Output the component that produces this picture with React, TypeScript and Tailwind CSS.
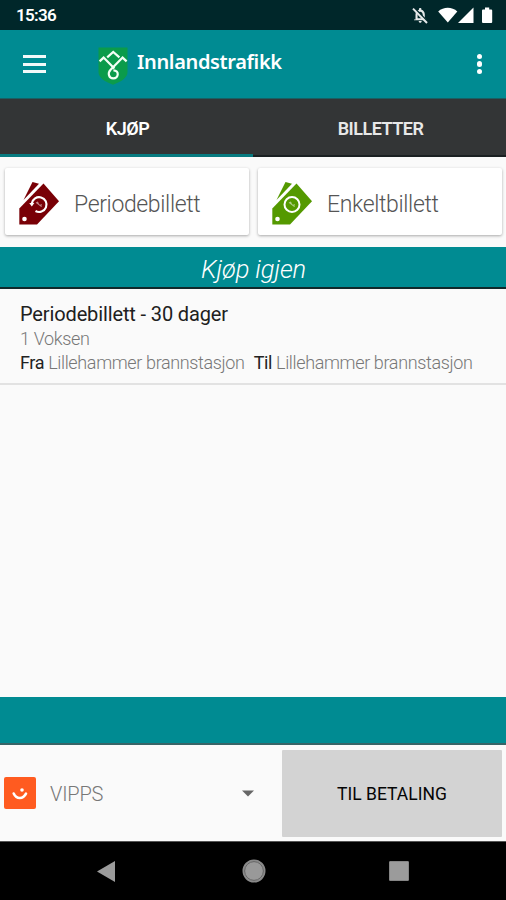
import React from 'react';

interface TicketIconProps {
  color: string;
  period?: boolean;
}

const TicketIcon: React.FC<TicketIconProps> = ({ color, period = false }) => (
  <svg width="40" height="43" viewBox="0 0 40 43" className="shrink-0">
    <path d="M13.5 0 L20 1.8 L4.5 18 Z" fill={color} />
    <path d="M24.5 1.4 L40 19.3 L18 42.5 H0.3 V26.5 Z" fill={color} />
    <circle cx="5.5" cy="37" r="2.3" fill="#fff" />
    {period ? (
      <>
        <path d="M12.8 21.5 A7.4 7.4 0 1 1 16.5 29" fill="none" stroke="#fff" strokeWidth="2.1" />
        <path d="M10.2 21 H15.4 L12.8 24.6 Z" fill="#fff" />
      </>
    ) : (
      <circle cx="20" cy="22.5" r="7.5" fill="none" stroke="#fff" strokeWidth="2" />
    )}
    <path d="M17 20.4 L22.6 24.6 M18.3 19.7 L19.5 21.7 M21 23.2 L23 22.8" stroke="#fff" strokeWidth="1.1" opacity="0.55" />
  </svg>
);

const StatusBar: React.FC = () => (
  <div className="flex h-[30px] shrink-0 items-center justify-between bg-[#00272a] pr-[11px] pl-4">
    <span className="pt-0.5 text-[17px] font-semibold tracking-[-0.7px] text-white">15:36</span>
    <svg width="84" height="20" viewBox="0 0 84 20" fill="#fff">
      <g opacity="0.9">
        <path d="M4.5 14.5 V9.5 C4.5 7 6 5.2 8 4.7 V4 C8 2.6 10.4 2.6 10.4 4 V4.7 C12.5 5.2 13.8 7 13.8 9.5 V13 L15.2 14.5 V15.3 H3 V14.5 Z M6.6 9.8 V13.2 H11.7 V9.8 C11.7 5.7 6.6 5.7 6.6 9.8 Z" fillRule="evenodd" />
        <path d="M7.7 16 H10.7 C10.7 18.4 7.7 18.4 7.7 16 Z" />
        <path d="M3.2 3 L17 17.2" stroke="#00272a" strokeWidth="1.8" />
        <path d="M2 3.6 L16 18" stroke="#fff" strokeWidth="2" />
      </g>
      <path d="M27.2 6.4 C32.5 1.4 41 1.4 46.3 6.4 L36.8 17.5 Z" />
      <path d="M47 18 L62.5 2.5 V18 Z" />
      <path d="M72 4.6 H74 V2.5 H78.2 V4.6 H80.2 Q81.2 4.6 81.2 5.6 V17 Q81.2 18 80.2 18 H72 Q71 18 71 17 V5.6 Q71 4.6 72 4.6 Z" />
    </svg>
  </div>
);

const AppBar: React.FC = () => (
  <header className="flex h-[68px] shrink-0 items-center bg-[#008b92] pr-6 pl-[23px] text-white">
    <div className="flex w-[23px] flex-col gap-[4.5px]">
      <span className="h-[3px] bg-white/95" />
      <span className="h-[3px] bg-white/95" />
      <span className="h-[3px] bg-white/95" />
    </div>
    <svg width="30" height="38" viewBox="0 0 30 38" className="mt-1 ml-[52px]">
      <path d="M0.5 0.5 H29.5 V25 C29.5 31 23 34.5 15 37.8 C7 34.5 0.5 31 0.5 25 Z" fill="#0b9b4b" />
      <g fill="none" stroke="#f3fff5" strokeWidth="2.2">
        <path d="M9.2 10.4 L15.2 5 L21.4 10.4" />
        <path d="M1.6 14.4 L5.6 10.6 L16.4 21.6" />
        <path d="M28.6 14.4 L24.6 10.6 L12.6 22.8 C9.2 26.4 11 31.4 15.2 31.4 C21 31.4 21.4 23.2 15.4 23.4" />
      </g>
    </svg>
    <h1 className="ml-[9px] pb-1 font-['Noto_Sans',sans-serif] text-[20px] font-semibold tracking-[-0.36px]">Innlandstrafikk</h1>
    <div className="ml-auto flex flex-col gap-[1.8px]">
      <span className="size-[5.5px] rounded-full bg-white" />
      <span className="size-[5.5px] rounded-full bg-white" />
      <span className="size-[5.5px] rounded-full bg-white" />
    </div>
  </header>
);

const Tabs: React.FC = () => (
  <nav className="grid h-[59px] shrink-0 grid-cols-2 border-t border-[#195f63] bg-[#333536] text-center text-[18px] font-semibold">
    <button className="border-b-3 border-[#087b80] pt-1 pl-0.5 tracking-[-0.5px] text-white">KJØP</button>
    <button className="border-b-2 border-[#1b2022] pt-[3px] pl-0.5 tracking-[-0.5px] text-[#e8e8e8]">BILLETTER</button>
  </nav>
);

interface TicketCardProps extends TicketIconProps {
  label: string;
}

const TicketCard: React.FC<TicketCardProps> = ({ label, ...icon }) => (
  <button className="flex h-[67px] items-center rounded-[2px] bg-white pt-1 pl-3.5 shadow-[0_1px_3px_rgba(0,0,0,0.33)]">
    <TicketIcon {...icon} />
    <span className="ml-[15px] pt-[3px] text-[23px] font-light tracking-[-0.36px] text-[#555]">{label}</span>
  </button>
);

const PreviousTicket: React.FC = () => (
  <article className="h-24 shrink-0 border-b-2 border-[#e2e2e2] pt-3 pl-5 font-light whitespace-nowrap text-[#777]">
    <h2 className="text-[20px] leading-[26px] font-normal tracking-[-0.13px] text-[#202020]">Periodebillett - 30 dager</h2>
    <p className="text-[18px] leading-6 tracking-[-0.35px]">1 Voksen</p>
    <p className="flex text-[18px] leading-6 tracking-[-0.36px]">
      <span className="mr-1 font-normal text-[#222]">Fra</span>
      <span>Lillehammer brannstasjon</span>
      <span className="mr-1 ml-[9px] font-normal text-[#222]">Til</span>
      <span>Lillehammer brannstasjon</span>
    </p>
  </article>
);

const PaymentBar: React.FC = () => (
  <div className="flex h-24 shrink-0 bg-[#fafafa] pt-[5px] pr-1 pb-1 pl-1">
    <button className="flex w-[278px] items-center">
      <svg width="32" height="32" viewBox="0 0 32 32" className="-mt-0.5">
        <rect width="32" height="32" rx="2" fill="#ff5b20" />
        <path d="M9.7 16.5 C12.5 22.5 19 22.5 22 16.7" fill="none" stroke="#fff" strokeWidth="2.6" strokeLinecap="round" />
        <circle cx="18" cy="13" r="1.8" fill="#fff" />
      </svg>
      <span className="ml-3.5 text-[20px] font-light tracking-[-0.2px] text-[#777]">VIPPS</span>
      <svg width="12" height="7" viewBox="0 0 12 7" className="mr-[28.5px] ml-auto">
        <path d="M0 0.5 H12 L6 6.5 Z" fill="#666" />
      </svg>
    </button>
    <button className="flex-1 rounded-[1px] bg-[#d3d3d3] pt-0.5 text-[17.5px] text-[#050505]">TIL BETALING</button>
  </div>
);

const NavigationBar: React.FC = () => (
  <footer className="flex h-[59px] shrink-0 items-center border-t border-[#555] bg-black pl-[97px]">
    <svg width="18" height="21" viewBox="0 0 18 21">
      <path d="M18 0 V21 L0 10.5 Z" fill="#9b9b9b" />
    </svg>
    <svg width="24" height="24" viewBox="0 0 24 24" className="ml-[126.5px]">
      <circle cx="12" cy="12" r="10.8" fill="#999" stroke="#8a8a8a" strokeWidth="1.4" />
      <circle cx="12" cy="12" r="9.4" fill="none" stroke="#555" strokeWidth="0.8" />
    </svg>
    <div className="ml-[123.5px] size-[20px] rounded-[1px] border border-[#858585] bg-[#9b9b9b]" />
  </footer>
);

const App: React.FC = () => {
  return (
    <div className="flex h-screen w-full flex-col overflow-hidden bg-[#fafafa] font-['Roboto',sans-serif]">
      <StatusBar />
      <AppBar />
      <Tabs />
      <section className="grid h-[90px] shrink-0 grid-cols-2 gap-[9px] pt-[11px] pr-1 pl-[5px]">
        <TicketCard label="Periodebillett" color="#790006" period />
        <TicketCard label="Enkeltbillett" color="#549900" />
      </section>
      <div className="h-[42px] shrink-0 border-b-2 border-[#10292b] bg-[#008b92] pt-1 pl-px text-center text-[25.5px] leading-9 font-light tracking-[-0.1px] text-white italic">
        Kjøp igjen
      </div>
      <PreviousTicket />
      <main className="flex-1" />
      <div className="h-12 shrink-0 border-b-2 border-[#386467] bg-[#008b92]" />
      <PaymentBar />
      <NavigationBar />
    </div>
  );
};

export default App;
